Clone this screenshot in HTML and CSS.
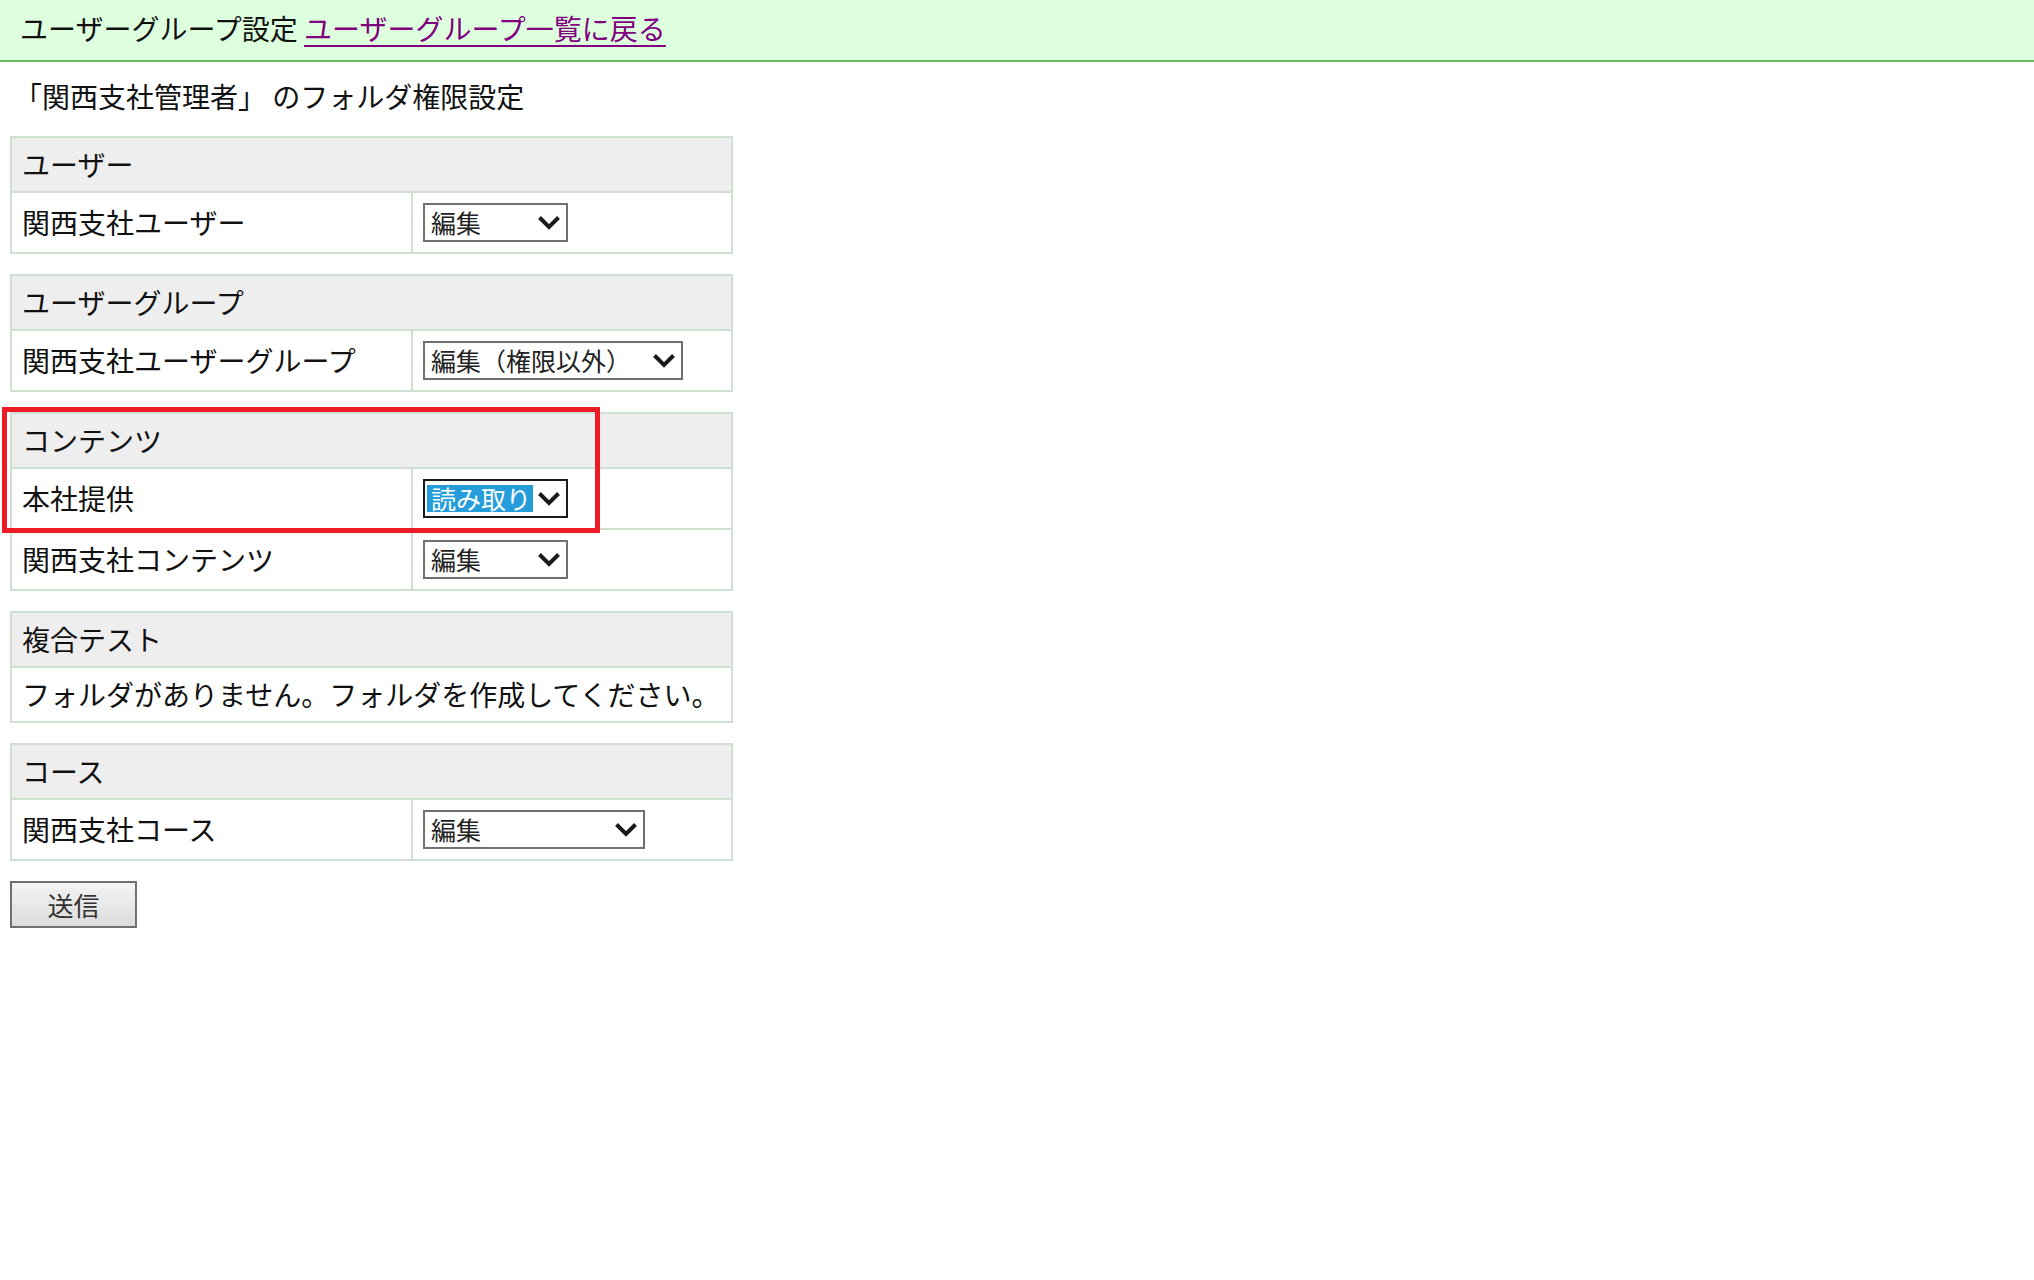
FILE: index.html
```html
<!DOCTYPE html>
<html lang="ja">

<head>
    <meta charset="UTF-8">
    <meta name="viewport" content="width=device-width, initial-scale=1.0">
    <title>ユーザーグループ設定</title>
    <link rel="stylesheet" href="styles.css">
</head>

<body>
    <div class="page-header">
        ユーザーグループ設定 <a href="#" class="back-link">ユーザーグループ一覧に戻る</a>
    </div>

    <div class="content">
        <h2 class="page-title">「関西支社管理者」 のフォルダ権限設定</h2>

        <form>
            <table class="perm-table">
                <tr>
                    <th colspan="2">ユーザー</th>
                </tr>
                <tr>
                    <td class="name">関西支社ユーザー</td>
                    <td>
                        <div class="select select-s">
                            <span class="value">編集</span>
                            <svg viewBox="0 0 24 15"><polyline points="2.5,2.5 12,12 21.5,2.5"></polyline></svg>
                        </div>
                    </td>
                </tr>
            </table>

            <table class="perm-table">
                <tr>
                    <th colspan="2">ユーザーグループ</th>
                </tr>
                <tr>
                    <td class="name">関西支社ユーザーグループ</td>
                    <td>
                        <div class="select select-l">
                            <span class="value">編集（権限以外）</span>
                            <svg viewBox="0 0 24 15"><polyline points="2.5,2.5 12,12 21.5,2.5"></polyline></svg>
                        </div>
                    </td>
                </tr>
            </table>

            <div class="marked">
                <table class="perm-table">
                    <tr>
                        <th colspan="2">コンテンツ</th>
                    </tr>
                    <tr>
                        <td class="name">本社提供</td>
                        <td>
                            <div class="select select-s focused">
                                <span class="value selected">読み取り</span>
                                <svg viewBox="0 0 24 15"><polyline points="2.5,2.5 12,12 21.5,2.5"></polyline></svg>
                            </div>
                        </td>
                    </tr>
                    <tr>
                        <td class="name">関西支社コンテンツ</td>
                        <td>
                            <div class="select select-s">
                                <span class="value">編集</span>
                                <svg viewBox="0 0 24 15"><polyline points="2.5,2.5 12,12 21.5,2.5"></polyline></svg>
                            </div>
                        </td>
                    </tr>
                </table>
                <div class="mark-box"></div>
            </div>

            <table class="perm-table">
                <tr>
                    <th colspan="2">複合テスト</th>
                </tr>
                <tr>
                    <td colspan="2">フォルダがありません。フォルダを作成してください。</td>
                </tr>
            </table>

            <table class="perm-table">
                <tr>
                    <th colspan="2">コース</th>
                </tr>
                <tr>
                    <td class="name">関西支社コース</td>
                    <td>
                        <div class="select select-m">
                            <span class="value">編集</span>
                            <svg viewBox="0 0 24 15"><polyline points="2.5,2.5 12,12 21.5,2.5"></polyline></svg>
                        </div>
                    </td>
                </tr>
            </table>

            <button type="button" class="submit-button">送信</button>
        </form>
    </div>
</body>

</html>
```

FILE: styles.css
```css
* {
    box-sizing: border-box;
}

body {
    margin: 0;
    font-family: "Noto Sans CJK JP", sans-serif;
    font-size: 28px;
    color: #111;
    background-color: white;
}

/* ヘッダー */
.page-header {
    height: 62px;
    line-height: 56px;
    padding-left: 20px;
    background-color: #ddffdd;
    border-bottom: 2px solid #66bb66;
}

.back-link {
    color: #800080;
    text-decoration: underline;
    text-underline-offset: 5px;
}

.content {
    padding: 0 10px;
}

.page-title {
    margin: 14px 0 20px;
    padding-left: 4px;
    font-size: 28px;
    font-weight: normal;
    line-height: 40px;
    white-space: pre;
}

/* 権限テーブル */
.perm-table {
    width: 723px;
    border-collapse: collapse;
    margin-bottom: 20px;
}

.perm-table th,
.perm-table td {
    border: 2px solid #d0e0d0;
    padding: 10px;
    line-height: 33px;
    text-align: left;
    font-weight: normal;
    vertical-align: middle;
}

.perm-table th {
    background-color: #eeeeee;
}

.perm-table td.name {
    width: 401px;
}

/* セレクト */
.select {
    display: flex;
    align-items: center;
    justify-content: space-between;
    height: 39px;
    padding: 0 5px 0 6px;
    border: 2px solid #707070;
    background-color: white;
    font-size: 25px;
    line-height: 1;
    color: #222;
}

.select svg {
    width: 24px;
    height: 15px;
    fill: none;
    stroke: #1a1a1a;
    stroke-width: 4;
}

.select-s {
    width: 145px;
}

.select-m {
    width: 222px;
}

.select-l {
    width: 260px;
}

.select.focused {
    border-color: #1a1a1a;
    padding-left: 2px;
}

.select .selected {
    background-color: #269ddb;
    color: white;
    line-height: 27px;
    padding: 0 2px 0 4px;
}

/* 注目枠 */
.marked {
    position: relative;
}

.mark-box {
    position: absolute;
    top: -5px;
    left: -8px;
    width: 598px;
    height: 126px;
    border: 5px solid #ed1c24;
}

.submit-button {
    display: block;
    width: 127px;
    height: 47px;
    margin-top: 1px;
    border: 2px solid #707070;
    background: linear-gradient(#f4f4f4, #dcdcdc);
    font-family: "Noto Sans CJK JP", sans-serif;
    font-size: 26px;
    color: #333;
    cursor: pointer;
}
```
